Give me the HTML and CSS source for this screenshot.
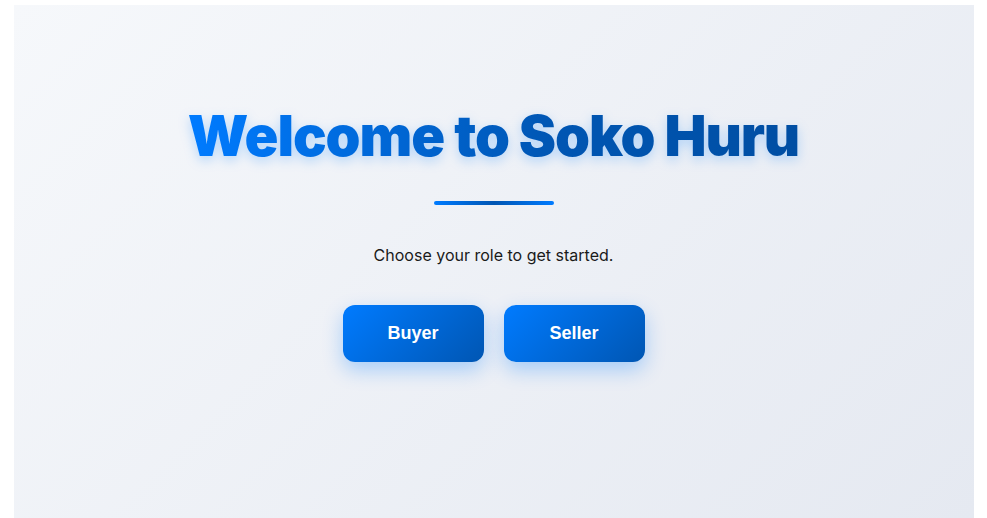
FILE: index.html
```html
<!DOCTYPE html>
<html lang="en">
<head>
<meta charset="utf-8">
<title>Soko Huru</title>
<link rel="stylesheet" href="styles.css">
</head>
<body>
<main class="welcome">
  <h1 class="welcome-title">Welcome to Soko Huru</h1>
  <div class="welcome-rule"></div>
  <p class="welcome-text">Choose your role to get started.</p>
  <div class="role-buttons">
    <button class="role-btn" type="button">Buyer</button>
    <button class="role-btn" type="button">Seller</button>
  </div>
</main>
</body>
</html>
```

FILE: styles.css
```css
html, body {
  margin: 0;
  padding: 0;
  background: #ffffff;
}
body {
  font-family: Inter, "Noto Sans", sans-serif;
  padding-top: 5px;
}
.welcome {
  box-sizing: border-box;
  width: 960px;
  height: 513px;
  margin: 0 auto;
  background: linear-gradient(135deg, #f6f8fb 0%, #e5e9f1 100%);
  display: flex;
  flex-direction: column;
  align-items: center;
  padding-top: 98px;
}
.welcome-title {
  margin: 0;
  font-family: Inter, sans-serif;
  font-weight: 900;
  font-size: 56px;
  line-height: 67px;
  letter-spacing: -1.1px;
  background: linear-gradient(90deg, #007bff 0%, #0056b3 60%, #004ea3 100%);
  -webkit-background-clip: text;
  background-clip: text;
  color: transparent;
  filter: drop-shadow(0 4px 6px rgba(0, 123, 255, 0.25));
}
.welcome-rule {
  width: 120px;
  height: 4px;
  margin-top: 31px;
  border-radius: 2px;
  background: linear-gradient(90deg, #007bff, #0056b3, #007bff);
}
.welcome-text {
  margin: 38px 0 0;
  font-size: 16px;
  line-height: 24px;
  color: #1a1a1a;
}
.role-buttons {
  margin-top: 38px;
  display: flex;
  gap: 20px;
}
.role-btn {
  width: 141px;
  height: 57px;
  border: none;
  border-radius: 12px;
  background: linear-gradient(135deg, #007bff 0%, #0056b3 100%);
  color: #ffffff;
  font-family: "Liberation Sans", Arial, sans-serif;
  font-weight: 700;
  font-size: 18px;
  box-shadow: 0 8px 20px rgba(0, 123, 255, 0.3);
  cursor: pointer;
}
```
